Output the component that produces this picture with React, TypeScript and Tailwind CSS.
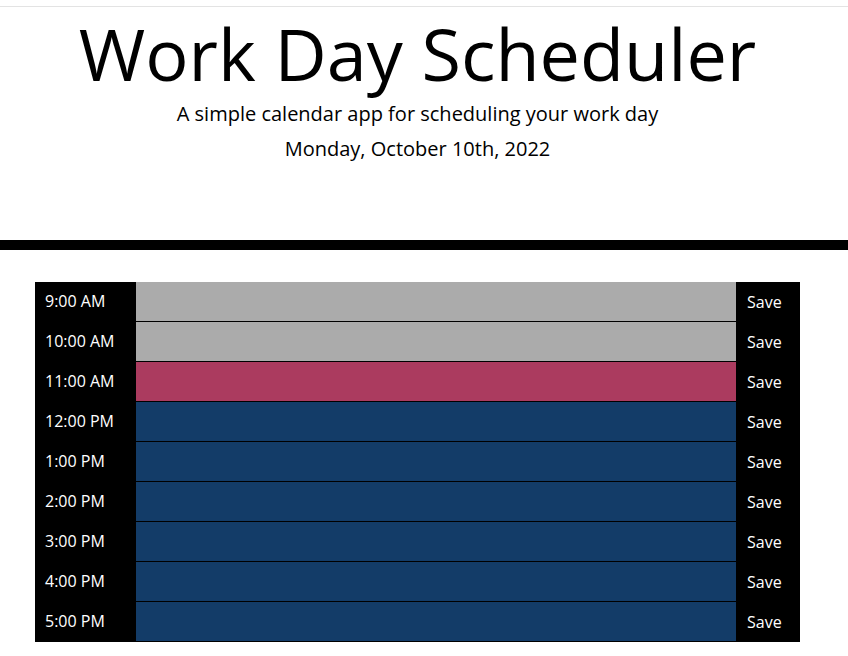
import React from "react";

const hours = [
  { label: "9:00 AM", state: "past" },
  { label: "10:00 AM", state: "past" },
  { label: "11:00 AM", state: "present" },
  { label: "12:00 PM", state: "future" },
  { label: "1:00 PM", state: "future" },
  { label: "2:00 PM", state: "future" },
  { label: "3:00 PM", state: "future" },
  { label: "4:00 PM", state: "future" },
  { label: "5:00 PM", state: "future" },
];

const bg: Record<string, string> = {
  past: "bg-[#ababab]",
  present: "bg-[#ab3b5f]",
  future: "bg-[#133c68]",
};

export default function App() {
  return (
    <div className="min-h-[656px] bg-white font-['Open_Sans',sans-serif] text-black">
      <div className="h-[6px]" />
      <header className="border-t border-[#e3e3e3] border-b-[10px] border-b-black h-[244px] pr-[13px] flex flex-col items-center">
        <h1 className="text-[72px] font-normal leading-[86px] mt-[3px]">Work Day Scheduler</h1>
        <p className="text-[20px] font-normal leading-[24px] mt-[6px]">A simple calendar app for scheduling your work day</p>
        <p className="text-[20px] font-normal leading-[24px] mt-[11px]">Monday, October 10th, 2022</p>
      </header>
      <div className="pt-[32px] pl-[35px]">
        <div className="w-[765px] flex flex-col">
          {hours.map((h) => (
            <div key={h.label} className="flex h-[40px]">
              <div className="w-[101px] bg-black text-white text-[16px] pl-[10px] pt-[7px] leading-[24px]">{h.label}</div>
              <textarea className={`w-[600px] h-[40px] resize-none border-b border-black outline-none ${bg[h.state]}`} />
              <button className="w-[64px] bg-black text-white text-[16px] text-left pl-[11px] pt-[8px] leading-[24px] self-stretch flex items-start">Save</button>
            </div>
          ))}
        </div>
      </div>
    </div>
  );
}
